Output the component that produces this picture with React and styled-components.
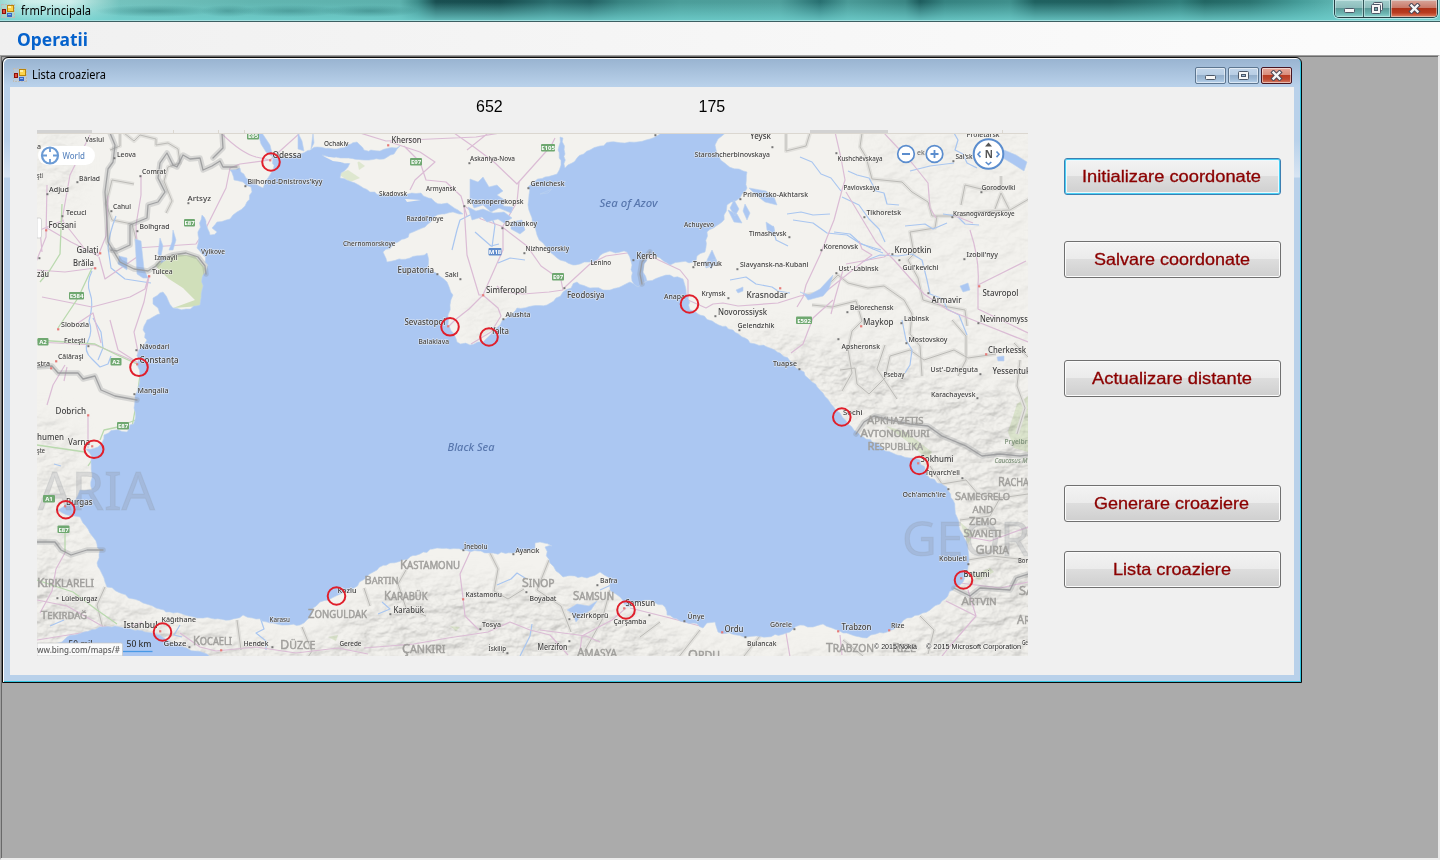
import React from "react";
import styled, { createGlobalStyle, css } from "styled-components";

const GlobalStyle = createGlobalStyle`
  * { box-sizing: border-box; }
  html, body { margin: 0; padding: 0; background: #ababab; overflow: hidden; }
  body { font-family: "Noto Sans", "Open Sans", sans-serif; color: #000; }
`;

const Screen = styled.div`
  width: 1440px;
  height: 860px;
  display: flex;
  flex-direction: column;
`;

const TitleBar = styled.header`
  height: 22px;
  flex: none;
  display: flex;
  align-items: flex-start;
  justify-content: space-between;
  border-bottom: 1px solid #3c5f62;
  box-shadow: inset 0 -1px 0 #a5e0e0;
  background:
    radial-gradient(ellipse 60px 6px at 155px 11px, rgba(40, 110, 110, 0.45), transparent),
    radial-gradient(ellipse 28px 6px at 228px 11px, rgba(40, 110, 110, 0.4), transparent),
    radial-gradient(ellipse 55px 6px at 290px 11px, rgba(40, 110, 110, 0.4), transparent),
    radial-gradient(ellipse 50px 6px at 370px 11px, rgba(40, 110, 110, 0.45), transparent),
    linear-gradient(180deg, transparent 10%, rgba(112, 208, 206, 0.85) 100%),
    linear-gradient(
      90deg,
      #9ad8d2 0, #cdeeea 25px, #d2efec 70px, #a5dcd7 92px, #74c2bd 120px, #62b5b0 250px,
      #5cb0ac 400px, #3c8b89 418px, #194f51 436px, #174c4e 500px, #2b6f70 550px,
      #236264 590px, #378381 620px, #4b9d99 680px, #4f9f9c 780px, #287071 820px,
      #4a9a97 848px, #3a8583 905px, #1e5d5e 920px, #358280 945px, #3f8f8c 1010px,
      #1f6160 1035px, #21605f 1110px, #317f7c 1180px, #226663 1205px, #2b7471 1250px,
      #459c99 1300px, #60b7b4 1340px, #85cfcc 1440px
    );
`;

const TitleGroup = styled.div`
  display: flex;
  align-items: center;
  height: ${(p) => p.$h}px;
  padding-left: ${(p) => p.$left}px;
  gap: ${(p) => p.$gap}px;
`;

const Caption = styled.svg`
  display: block;
  overflow: visible;
  text {
    font-family: ${(p) => p.$family || '"Noto Sans", sans-serif'};
    font-size: ${(p) => p.$size}px;
    font-weight: ${(p) => p.$weight || 400};
    fill: ${(p) => p.$color || "#000"};
  }
`;

const MainControls = styled.div`
  display: flex;
  height: 18px;
  margin-right: 2px;
  border: 1px solid #263f45;
  border-top: 0;
  border-radius: 0 0 5px 5px;
  overflow: hidden;
  box-shadow: 0 0 0 1px rgba(200, 240, 240, 0.8);
`;

const MainControl = styled.div`
  width: ${(p) => p.$w}px;
  display: flex;
  align-items: center;
  justify-content: center;
  padding-bottom: 1px;
  border-left: ${(p) => (p.$first ? 0 : 1)}px solid #35575a;
  box-shadow: inset 0 0 0 1px rgba(230, 250, 250, 0.45);
  background: ${(p) =>
    p.$danger
      ? "linear-gradient(180deg, #d8a69b 0, #c97a69 45%, #ad3117 48%, #b83c20 75%, #df8062 100%)"
      : "linear-gradient(180deg, #a3cfcd 0, #8dbdbc 45%, #5b9997 48%, #6db5b2 80%, #91d5d1 100%)"};
`;

const MenuStrip = styled.nav`
  height: 33px;
  flex: none;
  display: flex;
  align-items: center;
  padding-left: 17px;
  background: linear-gradient(90deg, #f0f0f0, #fcfcfc);
`;

const Workspace = styled.main`
  flex: 1;
  display: flex;
  align-items: flex-start;
  background: #ababab;
  border-style: solid;
  border-width: 1px 2px 2px 1px;
  border-color: #a0a0a0 #e9e9e9 #ededed #a0a0a0;
  box-shadow: inset 1px 1px 0 #696969;
  padding: 1px 0 0 1px;
`;

const ChildWindow = styled.section`
  width: 1300px;
  height: 626px;
  display: flex;
  flex-direction: column;
  border: 1px solid #0a0a0a;
  border-radius: 6px 6px 0 0;
  padding: 1px 7px 7px;
  background:
    linear-gradient(180deg, #98b3d0 0, #b9d1ea 28px, #b9d1ea 82px, #d7e4f2 119px, #b9d1ea 120px);
  box-shadow: inset 1px 1px 0 #fff, inset -1px -1px 0 #35c5e0;
`;

const ChildHeader = styled.div`
  height: 28px;
  flex: none;
  display: flex;
  align-items: flex-start;
  justify-content: space-between;
`;

const ChildControls = styled.div`
  display: flex;
  gap: 2px;
  padding: 8px 2px 0 0;
`;

const ChildControl = styled.div`
  width: 31px;
  height: 17px;
  display: flex;
  align-items: center;
  justify-content: center;
  border: 1px solid ${(p) => (p.$danger ? "#481521" : "#5d7690")};
  border-radius: 2px;
  box-shadow: inset 0 0 0 1px rgba(255, 255, 255, 0.5);
  background: ${(p) =>
    p.$danger
      ? "linear-gradient(180deg, #e6a99c 0, #d98c7b 47%, #b93d24 50%, #bd4a32 75%, #d57c66 100%)"
      : "linear-gradient(180deg, #c3d6ea 0, #b7cde4 47%, #94afcb 50%, #9fbbd7 75%, #b9d3ed 100%)"};
`;

const Client = styled.div`
  flex: 1;
  display: flex;
  background: #f0f0f0;
`;

const MapColumn = styled.div`
  width: 1018px;
  padding-left: 27px;
`;

const Readouts = styled.div`
  height: 43px;
  display: flex;
  gap: 195px;
  padding: 10px 0 0 439px;
  font: 16px/20px "Liberation Sans", sans-serif;
  span { width: 27.5px; }
`;

const MapCanvas = styled.svg`
  display: block;
  width: 991px;
  height: 526px;
  font-family: "Noto Sans", "Open Sans", sans-serif;
`;

const Actions = styled.div`
  display: flex;
  flex-direction: column;
  padding: 71px 0 0 36px;
`;

const ActionButton = styled.button`
  width: 217px;
  height: 37px;
  margin: 0 0 ${(p) => p.$after || 0}px;
  padding: 0 2px 0 0;
  display: flex;
  align-items: center;
  justify-content: center;
  border: 1px solid #707070;
  border-radius: 3px;
  background: linear-gradient(180deg, #f3f3f3 0, #ebebeb 48%, #dddddd 50%, #cfcfcf 100%);
  box-shadow: inset 0 0 0 1px #fbfbfb;
  ${(p) =>
    p.$focused &&
    css`
      border-color: #3c7fb1;
      box-shadow: inset 0 0 0 1px #48d0f5, inset 0 0 0 2px #eef8fc;
    `}
`;

function Label({ children, width, height, base, ...rest }) {
  return (
    <Caption width={width} height={height} {...rest}>
      <text x="0" y={base} textLength={width} lengthAdjust="spacingAndGlyphs">{children}</text>
    </Caption>
  );
}

function FormIcon() {
  return (
    <svg width="14" height="14" viewBox="0 0 14 14" shapeRendering="crispEdges">
      <rect x="0.5" y="0.5" width="13" height="13" fill="rgba(215,205,195,.35)" stroke="#bcbcb8" strokeDasharray="2 1" />
      <rect x="6" y="1" width="7" height="7" fill="#b98509" />
      <rect x="7" y="2" width="5" height="5" fill="#fcd34c" />
      <rect x="7" y="2" width="3" height="2" fill="#fff0a6" />
      <rect x="1" y="5" width="4" height="5" fill="#8d1009" />
      <rect x="2" y="6" width="2" height="3" fill="#e0503c" />
      <rect x="6" y="9" width="5" height="4" fill="#3867c4" />
      <rect x="7" y="10" width="3" height="1" fill="#8fb6f3" />
    </svg>
  );
}

const MinGlyph = () => (
  <svg width="13" height="13" viewBox="0 0 13 13">
    <rect x="1.5" y="6.5" width="10" height="4" rx="1" fill="#f7f7f7" stroke="#4c5767" />
  </svg>
);
const MaxGlyph = () => (
  <svg width="13" height="11" viewBox="0 0 13 11">
    <rect x="1.5" y="1.5" width="10" height="8" rx="1" fill="#f7f7f7" stroke="#4c5767" />
    <rect x="4.5" y="4.5" width="4" height="2" fill="#9fb8d2" stroke="#4c5767" />
  </svg>
);
const RestoreGlyph = () => (
  <svg width="14" height="14" viewBox="0 0 14 14">
    <rect x="3.5" y="1.5" width="9" height="8" rx="1" fill="#f7f7f7" stroke="#4c5767" />
    <rect x="1.5" y="3.5" width="9" height="9" rx="1" fill="#f7f7f7" stroke="#4c5767" />
    <rect x="4.5" y="6.5" width="3" height="3" fill="#79a9a8" stroke="#4c5767" />
  </svg>
);
const CloseGlyph = () => (
  <svg width="13" height="11" viewBox="0 0 13 11">
    <path d="M3.500 2.500l6 6M9.500 2.500l-6 6" stroke="#4e4a57" strokeWidth="4.4" strokeLinecap="square" />
    <path d="M3.500 2.500l6 6M9.500 2.500l-6 6" stroke="#f6f6f6" strokeWidth="2.4" strokeLinecap="square" />
  </svg>
);

/* Map geometry, in window pixels */
const blackSea = [
  [273,155],[285,158],[297,155],[317,147],[337,149],[357,142],[364,150],[380,151],[400,146],[394,154],[384,159],[364,160],[340,158],[322,155],[333,161],[350,163],[341,173],[340,178],[352,182],[370,192],[385,195],[408,194],[421,193],[435,202],[450,205],[458,210],[463,214],
  [453,212],[437,215],[425,227],[413,232],[398,242],[383,252],[387,262],[410,258],[427,253],[428,268],[436,273],[447,282],[453,295],[450,305],[448,315],[448,325],[454,334],[457,342],[470,345],[483,342],[493,332],[500,325],[507,318],[517,308],[532,306],[547,305],[556,298],[563,292],[577,282],[590,288],[610,290],[622,286],[630,282],[638,287],[647,281],[660,277],[670,275],[683,279],[686,290],[688,298],[690,310],[700,315],[715,323],[733,330],[750,343],[767,347],[780,353],[790,361],[800,370],[812,382],[823,393],[831,404],[840,413],[848,424],[857,432],[866,439],[877,443],[885,451],[897,455],[910,458],[920,460],[927,475],[937,483],[947,487],[953,500],[957,517],[960,530],[966,541],[968,550],[968,567],[965,577],[960,585],[953,590],[942,601],[930,610],[919,615],[907,618],[897,627],[887,632],[876,634],[867,638],[855,636],[843,633],[832,628],[823,624],[813,627],[800,625],[790,632],[767,637],[747,637],[732,634],[718,632],[715,622],[707,623],[703,628],[693,623],[680,621],[667,615],[665,607],[650,600],[633,603],[627,607],[620,597],[610,590],[610,578],[600,572],[587,578],[575,576],[563,577],[556,571],[550,563],[545,547],[552,546],[540,542],[535,543],[535,549],[513,553],[493,553],[478,551],[463,550],[450,549],[437,548],[420,554],[403,560],[390,563],[377,570],[363,580],[354,588],[343,593],[332,598],[320,602],[313,608],[310,617],[300,625],[285,625],[270,623],[256,619],[243,615],[230,620],[215,619],[200,618],[185,615],[170,612],[156,608],[143,603],[123,594],[107,587],[104,578],[97,563],[100,550],[93,537],[88,529],[83,523],[80,517],[67,515],[58,510],[66,504],[73,502],[80,490],[92,490],[92,474],[92,457],[86,449],[98,447],[102,443],[104,435],[115,430],[127,432],[135,420],[134,408],[135,400],[140,380],[138,367],[138,353],[147,340],[143,330],[147,320],[160,314],[158,308],[153,304],[153,298],[163,292],[168,300],[173,308],[186,309],[200,305],[202,290],[203,275],[208,265],[203,255],[197,248],[198,235],[202,215],[206,221],[210,235],[217,232],[212,228],[217,222],[230,219],[233,215],[237,212],[245,206],[252,192],[251,187],[243,182],[234,180],[230,170],[240,168],[246,178],[263,188],[268,178],[273,170],
];
const azov = [
  [528,187],[535,181],[545,177],[557,174],[561,165],[558,150],[560,137],[563,138],[565,168],[577,158],[590,150],[600,146],[610,142],[625,143],[637,142],[650,139],[664,132],[727,132],[718,139],[715,145],[719,156],[727,165],[739,169],[747,172],[747,188],[740,198],[727,205],[724,215],[722,222],[707,232],[705,252],[697,256],[693,262],[680,262],[670,265],[660,258],[650,255],[644,264],[643,272],[647,281],[638,287],[632,281],[632,265],[627,252],[607,252],[598,259],[590,262],[580,264],[573,265],[560,260],[550,252],[543,243],[537,235],[534,225],[532,218],[528,205],[529,195],
];
const marmara = [[62,642],[67,637],[84,632],[103,627],[115,626],[127,628],[145,632],[160,635],[172,643],[183,647],[195,651],[207,654],[214,660],[55,660],[52,645]];

const smallWaters = [
  "M135 239l6 2 3 28 4 9 -5 0 -6 -4z",
  "M119 256l8 2 0 12 -9 -6z",
  "M160 238l3 8-2 10 5 4-5 3-3-10z",
  "M173 230l3 10-3 10-4 0 3-8z",
  "M258 133l3 11 5 8 7 5-3-12-4-6-4-6z M298 133l4 8 2 10-6-2z M313 133l1 10 -3 6z",
  "M470 179l8 3 5-5 6 10 8-2 6 6-6 4 9 6-3 5 10 1-2 6-12-5-8 4-8-7-9 3-4-9z",
  "M468 207l8 4 7-2 10 4 11-1 8 6-8 5-6-4-11 3-5-5-10 3z",
  "M511 222l11-2 3 10-5 4-9-5z M540 194l12-5-4 4z",
  "M749 188l17 3 8 6 3 8-12-3-9-7z M734 200l5 9-4 7-5-8z M728 210l9 4 5 9-8-1z M745 204l5 9-3 7-4-9z M766 222l8 5 1 10-8-7z M712 250l4 9-5 10-4-9z M704 262l12-3 2 5-12 4z",
  "M800 292l9 3 11-6 13-14-4 14-6 7-15 4-4-6z",
  "M1004 150l12 5 11 7-3 9-11-7-10-6z M960 286l8-3 2 7-7 2z M997 357l7-1 0 5-6 0z",
  "M567 610l10-6 12 2 8-5-6 9-9 5-6 7-4-9z",
  "M736 290l7-3 0 4-5 2z",
];
const rivers = [
  "M92 271q-6 12-2 22t-1 28q4 10-1 20t4 18l8 8 8-3 3-8",
  "M93 318l8 14 2 16-5 12",
  "M116 216q-7 18-8 32l3 20 14 11 26 4",
  "M800 157l12 5 9 12 10 4 10 13 M848 171l9 4 12 3 7 13 8 2 3 11 12 1",
  "M787 214l14-2 12 3 17-1 M793 220l20 3 14 10 20 2 14 9 20 6",
  "M834 232l16 2 10 9 13 6 10 4 M842 197l17 8 10 14 10 10 6 13",
  "M954 133l4 7-3 10 8 4 4 9 10 5 M910 171l20-5 24-3 M905 226l20-2 8 5 14-6",
  "M730 280l16-3 10 7 16 3 6 4 12 2 M773 226l3 14 12 6",
  "M862 262l18-7 18 1 14-2 10 6 5 20 3 14 13 5 4 10 12 6 8 20",
  "M902 320l4 20 6 10-2 15-5 8 M943 214l14 2 8 8 14 1",
  "M452 250l5-20 3-10 12-6 18 1 5 10-3 22 M475 232l16 14 8-2",
  "M525 260l-15-2-12 5 M497 585l14-6 6-6 8 5 M520 656l10-20 2-12 M600 590l22-10 M378 614l12-5-8-7",
  "M260 617l4 12 -8 4 10 8 0 9 M180 625l-6 10 8 2 M54 464l7 2 M64 620l-14 6",
];
const roads = [
  "M221 133q20 20 35 24l14 3 30-27 M270 160l-30 4-10 4-4 20-20 40-10 16-60 4",
  "M47 185l-1 52-10 25 M64 220l-24 10 2 22 M47 228l24 14 20 10 8 2 M90 135l-20 40-8 45 22 28 14 8 8-20 2-40 M141 175l0 20-5 30 1 32-32 22-6-22",
  "M149 275l-4 14-15 8-38 10-50-10 M149 277l-5 25-10 30 5 25 M95 268l-30 4-28-2",
  "M37 342l58 3 25 10 18 8 M75 325l18-12 8 30 M110 320l8 30 22 14 M65 365l-12 20-6 20 M67 367l-3 14 M88 415v33",
  "M390 142l30 10 15 10 -20 18-5 10 M404 146l16 16 6 18 20 2 15 14 6 20 M467 150l20-16 M360 133l26 8 90-4 24-4 M454 133l20 14 20 15 23 22 34-38 4-8",
  "M464 205l3 50 12 40 4 0 20-45 0-24 14-24 2-20 M466 207l15 12 20 7 26 20 14 20 20 14 2 10-14 2-26 2-20-2-6-6 M564 288l26-24 16-8 28-4 16 4 30 14 8 10v18",
  "M483 295l-14 14-14 11-6 6 M484 296l14 12 3 8-10 16-20 12",
  "M688 300l18 8 7-4 10-1 15 3 40-3 22-7 24-3 40-32 8-6-10-6-3-8",
  "M842 190l3-10-4-22-6-26 M842 190l-8 30-14 35-14 30-3 12-6 10 M846 192l30 50 18 18 30 34 24 16 30 12 50 20",
  "M846 264l38-7 6-4 M970 230q10 30 8 55l0 24 50 24 M978 285l20-10 28-14 M953 215l20 8",
  "M884 133l28 30 16 20 2 25 6 10 M843 270l-8 28-4 16 M833 300l-20 18 -10 26-12 9",
  "M968 537l22 4 38-14 M968 590l8 26-26 30-8 10 M976 616l-30-15 M960 583l40 5 28-6",
  "M37 600l30 6 35 20 20 4 20-8 M66 551l-10 18-4 22-12 22 M37 640l50-8",
  "M470 552l-10 22 3 24 2 18 14 14 M364 648l50-4 34-6 40-6 22-10 20 8 20 5 18 20 M580 650l2-14 30-16 14-12 M540 630l46 6 14 6",
  "M180 633l20 14 16 4 40-4 40 6 42-5 30 6 M840 635l2 20 M786 633l4 24 M630 608l40 10 30 8",
];
const greenRoads = [
  "M62 204l-2 50-10 16-10 12 M92 268l-14 30-20 30 M37 340l58 4 20 10 22 10 M37 580l36 12 24 18 20 14 M37 445l48 7 M100 440l4-10 14-3 20-8 M140 375l-4 30-4 22 M65 530l0 22 M92 460l-4 6",
];
const regions = [
  "M124 133l10 8 6-6 16 4 0 6 12-2 10 6 2 14-12 4-4 14 8 20-6 12 M134 184l-22-4-6 24 6 16 20 4 8 30 M120 134v12l-10 4",
  "M786 133l0 18 20-5 4-13 M862 133l-2 14 6 10 6 22 30 3 10 10 16 10 4 14 30 0 14-4 34-2 24-14 M937 216l-2 12-25 4 4 22-6 6 10 18 5 22 20 6 22 4 2 16",
  "M961 205l4-20 20 5 16-2 0-12 M995 209l6-16 8 16",
  "M805 295l15-2 18-18 10 8 20 5 16-2 20 14 8 14-2 20 10 12 2 30 M812 305l20 2 24-6 6 20-10 10-4 18 4 24-10 18 M885 345l-8 24 20 30 M840 370l15-2 2 16 12 10 16-16 5-22 20-6 14 10 30-10 14 8 28-4 M952 320l14 16 0 24-8 16",
  "M1014 343l14 14 M1020 360l-3 26 8 22-8 26",
  "M105 587l-8 18 6 24-4 14 M237 620l4 30 M302 627l10 24-4 6 M490 553l8 16-4 22 14 8 16-10 M549 560l-12 30 24 16 10 26 M364 588l6 18 M406 570l-8 14 8 24 20 8 M610 590l-8 30-18 32 M760 636l-16 20 M700 630l-22 28 M843 640l20 16 M920 616l14 14-6 24 M660 622l-20 15",
  "M930 466l12 18 24-4 12 14 24 4 M960 520l30-4 10-18 28-4 M968 560l24-4 36 4",
];
const borders = [
  "M110 133L115 145 113 162 108 169 105 192 107 222 108 242 114 252 120 262 134 269 148 271 156 266 162 259 172 255 186 253 198 257 205 266 206 274",
  "M111 250L117 251 130 245 130 225 147 218 148 205 158 202 165 192 158 178 160 163 167 153 173 165 177 167 183 155 190 159 200 158 203 170 212 166 220 161 223 167 237 167 M222 133L223 148 213 158",
  "M37 367l15-1 6 7 20 0 5 6 12-3 6 14 14 6 22 4",
  "M37 542l18 0 6 8 10 5 16-5 16 0",
  "M856 434l8-12 10-6 16 4 20 4 18 2 14 10 24 10 16 10 18-2 20 2 20-3",
  "M954 588l16 8 10-8 30 2 6-12 12-4",
  "M650 252l-8 10-2 12 2 10",
];

/* Adds small deterministic bends to every edge of a shoreline */
function shore(points) {
  const out = [];
  const n = points.length;
  let seed = 7;
  const rnd = () => {
    seed = (seed * 16807) % 2147483647;
    return seed / 2147483647 - 0.5;
  };
  points.forEach(([x, y], i) => {
    const [nx, ny] = points[(i + 1) % n];
    out.push([x, y]);
    const len = Math.hypot(nx - x, ny - y);
    const steps = Math.floor(len / 3.5);
    for (let s = 1; s < steps; s += 1) {
      const t = s / steps;
      out.push([x + (nx - x) * t + rnd() * 2.4, y + (ny - y) * t + rnd() * 2.4]);
    }
  });
  return "M" + out.map((p) => p.map((v) => v.toFixed(1)).join(" ")).join("L") + "Z";
}

/* text, x, baseline, width, size */
const towns = [
  ["Vaslui",85,142,19,7.5],["Leova",117,156.5,19,7.5],["Comrat",142,174,24,7.5],["Bârlad",79,180.5,21,7.5],["Adjud",49,191.5,20,7.5],["Artsyz",187.5,201,23.5,7.5],["Cahul",113,209,18,7.5],["Tecuci",66,215,20.5,7.5],["Focşani",48.5,228,27.5,7.8],["Bolhgrad",139.5,228.5,30,7.5],["Galaţi",76.5,252.5,22,8],["Brăila",73,266,21,8],["Vylkove",201,254,24,7],["Izmayil",154.5,260,23,7.3],["Tulcea",152,273.5,20.5,7.3],["zău",37,277,12,7.8],["şti",37,178,6,7],["a",37,149,4,7],
  ["Odessa",272.5,157.5,29,8.6],["Ochakiv",324,146,24.5,7.3],["Bilhorod-Dnistrovs'kyy",247.5,183.5,75,7.3],["Kherson",391.5,143,30,8],["Askaniya-Nova",470,161,45,7.3],["Genichesk",530.5,186,34,7.6],["Armyansk",426,191,30,7.3],["Skadovsk",379,195.5,28,7.2],["Krasnoperekopsk",467,204,56.5,7.5],["Razdol'noye",406.5,221,37,7.2],["Dzhankoy",505,226,32,7.5],["Chernomorskoye",343,245.5,52.5,7.2],["Nizhnegorskiy",525.5,251,43.5,7.2],["Eupatoria",397.5,273,36.5,8],["Saki",445,277,13.5,7.5],["Lenino",590.5,264.5,20.5,7.2],["Kerch",636.5,259,20.5,8],["Simferopol",486,293,41,8],["Feodosiya",567,298,37.5,7.8],["Anapa",664,298.5,21,7.5],["Alushta",505.5,317,25,7.6],["Sevastopol",404.5,325,41,8],["Yalta",491,334,18,8],["Balaklava",418.5,343.5,30.5,7.4],
  ["Yeysk",750,139,21,8],["Staroshcherbinovskaya",694.5,156.5,75.5,7.5],["Kushchëvskaya",837.5,160.5,45,7.3],["Proletarsk",966.5,137,33,7.5],["Sal'sk",955.5,159,17,7.3],["Pavlovskaya",843.5,190,36,7.2],["Gorodoviki",981.5,190,34,7.2],["Primorsko-Akhtarsk",743,197,65,7.5],["Tikhoretsk",866.5,215,34.5,7.5],["Krasnogvardeyskoye",953,216,61.5,7.3],["Achuyevo",684,227,30,7.3],["Timashevsk",749,235.5,37.5,7.5],["Korenovsk",823.5,248.5,34.5,7.5],["Kropotkin",894.5,252.5,37,7.8],["Izobil'nyy",966.5,257,31.5,7.5],["Temryuk",693,265.5,29,7.5],["Slavyansk-na-Kubani",740,266.5,68.5,7.5],["Ust'-Labinsk",838.5,270.5,40,7.5],["Gul'kevichi",902.5,269.5,36,7.5],["Krymsk",701.5,295.5,24,7.6],["Krasnodar",746.5,298,41,8.3],["Stavropol",982.5,296,36,8],["Armavir",931.5,303,30,8],["Novorossiysk",718,315,49,8],["Belorechensk",850,310,43.5,7.5],["Labinsk",904,321,25,7.5],["Maykop",863,325,30.5,8],["Nevinnomyssk",980,322,52,8],["Gelendzhik",737.5,328,37,7.4],["Mostovskoy",908.5,341.5,39,7.5],["Apsheronsk",841.5,348.5,38.5,7.5],["Cherkessk",988,353,38,7.7],["Tuapse",773,366,24,7.4],["Psebay",883.5,377,21,7.2],["Ust'-Dzheguta",930.5,372,47.5,7.4],["Yessentuki",992.5,373.5,40,7.7],["Karachayevsk",931,396.5,44.5,7.4],["Sochi",843,414.5,19.5,7.6],["Sokhumi",920.5,462,33,7.8],["Tqvarch'eli",925,475,35,7.4],["Och'amch'ire",902.5,497,43.5,7.4],
  ["Slobozia",61,327,28,7.5],["Feteşti",64,343,21.5,7.5],["Călăraşi",58,359,25.5,7.5],["stra",37,366,13,7.5],["Năvodari",139.5,348.5,30,7.5],["Constanţa",139.5,363,39,8],["Mangalia",137.5,392.5,31,7.5],["Dobrich",55.5,413.5,30.5,8],["humen",37,439.5,27,7.8],["Varna",68,445,22,8],["şte",37,452.5,8,7.5],["Burgas",66,505,26.5,8],
  ["Lüleburgaz",61.5,601,36,7.6],["Istanbul",123.5,628,34,8.3],["Kâğıthane",161.5,621.5,34.5,7.5],["Gebze",163.5,645.5,23,7.5],["Karasu",269.5,622,20.5,7.2],["Hendek",243.5,646,25,7.5],["Gerede",339.5,645.5,22,7.2],["Kozlu",337.5,593,19,7.4],["İnebolu",464,548.5,23.5,7.3],["Ayancık",515.5,552.5,24,7.2],["Kastamonu",465.5,597,36.5,7.6],["Boyabat",529.5,601,27,7.5],["Karabük",393.5,612.5,30.5,7.8],["Tosya",482,627,19,7.5],["İskilip",488.5,651,17.5,7.5],["Merzifon",537.5,650,30,7.7],["Vezirköprü",572,617.5,36.5,7.6],["Bafra",600,583,17.5,7.5],["Samsun",625.5,605.5,29.5,7.8],["Çarşamba",613.5,624,33,7.6],["Ünye",687.5,619,17,7.4],["Ordu",724.5,631.5,19,7.7],["Bulancak",747,646,29.5,7.4],["Görele",770,627,22,7.4],["Trabzon",841.5,630,30,7.8],["Rize",891,628,13.5,7.4],["Kobuleti",939,561,28,7.4],["Batumi",963.5,577,26,7.8],["Bor",1018,563,10,7],["Ge",1022,645,6,6.5],
];
const provinces = [
  ["Kırklareli",37,587,57,10.5],["Tekirdağ",41,619,46,10],["Zonguldak",308,618,59,10.5],["Bartın",364.5,584,34,10],["Kastamonu",400,568.5,60,10.5],["Karabük",384,600,43.5,10.5],["Sinop",522,587,32.5,11],["Samsun",573,599.5,41,10.5],["Kocaeli",193,645,39,10.5],["Düzce",280,649,35.5,11.5],["Çankırı",402,652.5,43.5,11.5],["Amasya",577,657,40,11],["Ordu",688,659,32,11],["Trabzon",826,652,48,11.5],["Rize",892,652,24,10.5],["Artvin",961.5,605,35,10],["Guria",975.5,554,33.5,11],["Apkhazetis",867,424,56.5,9.5],["Avtonomiuri",860.5,436.5,69,9.5],["Respublika",867.5,449.5,55.5,10],["Samegrelo",955,500,55,10],["and",972.5,512.5,20.5,9.5],["Zemo",969,525,27.5,10],["Svaneti",963.5,537,38,9],["Racha",998,485.5,31,10.5],["Sa",1019,595,14,10.5],["Ar",1017,624,13,10.5],
];
const shields = [["E95",247,136,12],["E105",541,148,14],["E97",410,162,12],["E87",184,223,11],["E584",69,296,15],["E97",552,277,12],["E592",796,320.5,16],["A2",37.5,342,11],["A2",110.5,362,11],["E87",117,426,12],["A1",43,499,12],["E87",57.5,529.5,12],["M18",488.5,252,13,"#5f8bcb"]];
const dots = [[47,194],[77,182],[62,216],[114,158],[140,176],[111,211],[137,231],[188,203],[39,258],[245,186],[469,163],[528,188],[464,206],[502,228],[524,253],[460,279],[437,274],[633,260],[564,288],[503,319],[655,135],[772,147],[836,153],[740,199],[864,217],[789,237],[821,250],[892,254],[964,259],[952,217],[899,260],[836,273],[693,267],[737,269],[728,298],[715,316],[928,293],[847,312],[901,323],[978,323],[739,330],[838,339],[906,343],[799,369],[980,374],[977,398],[962,478],[948,489],[88,346],[136,350],[134,394],[57,598],[189,647],[272,647],[463,550],[513,554],[526,592],[390,614],[480,629],[569,619],[597,585],[649,615],[684,621],[745,637],[794,629],[968,564],[507,653],[569,641],[953,161],[981,192]];
const redDots = [[388,145],[46,230],[100,253],[95,268],[149,276],[270,160],[448,326],[483,295],[780,288],[979,286],[861,326],[986,354],[58,329],[56,361],[137,364],[88,415],[92,446],[65,506],[160,631],[221,650],[463,599],[624,608],[722,632],[838,631],[889,630],[961,578],[918,463],[51,368]];
const ports = [[271,162],[450,326.8],[489,337],[689.5,304],[139,367.3],[94,449.3],[65.8,509.7],[841.8,417],[919.2,465.5],[963.5,580],[626,610],[336.5,596],[162.5,632]];

function SmallCaps({ item: [t, x, y, w, s] }) {
  const head = t === "and" ? "" : t[0];
  const tail = (t === "and" ? t : t.slice(1)).toLocaleUpperCase(/[ıİ]/.test(t) ? "tr" : "en");
  const caps = t === "Kırklareli" ? "IRKLARELI" : tail;
  return (
    <text x={x} y={y} textLength={w} lengthAdjust="spacingAndGlyphs" fontSize={s * 1.12}>
      {head}
      <tspan fontSize={s * 0.94}>{caps}</tspan>
    </text>
  );
}

function SeaMap() {
  return (
    <MapCanvas viewBox="37 130 991 526">
      <defs>
        <filter id="relief" x="0" y="0" width="100%" height="100%" colorInterpolationFilters="sRGB">
          <feTurbulence type="fractalNoise" baseFrequency="0.055 0.085" numOctaves="4" seed="12" result="n" />
          <feDiffuseLighting in="n" surfaceScale="3" lightingColor="#ffffff" result="l">
            <feDistantLight azimuth="225" elevation="66" />
          </feDiffuseLighting>
          <feComposite in="l" in2="SourceGraphic" operator="in" />
        </filter>
        <filter id="soft"><feGaussianBlur stdDeviation="13" /></filter>
        <mask id="hills" maskUnits="userSpaceOnUse" x="37" y="130" width="991" height="526">
          <g filter="url(#soft)" fill="#fff">
            <path d="M730 325L800 340 870 350 930 380 1060 400V700H20V600L60 560 100 600 300 650 400 580 580 590 700 650 860 660 950 610 980 560 955 480 840 410z" />
            <path opacity=".55" d="M20 415L70 420 90 480 90 550 20 590zM470 308L510 300 500 335 465 340zM37 133H75V200H37z" />
            <path opacity=".25" d="M870 120H1040V400L850 370z" />
          </g>
        </mask>
      </defs>
      <rect x="37" y="130" width="991" height="3" fill="#efefef" />
      <path d="M37 130h55v3H37zM810 130h78v3h-78z" fill="#d2d2d2" />
      <path d="M37 133.5h991M173.500 130v3M218.500 130v3M244.500 130v3M1002.500 130v3" stroke="#dbd7d0" fill="none" />
      <svg x="37" y="134" width="991" height="522" viewBox="37 134 991 522">
        <rect x="37" y="134" width="991" height="522" fill="#f3f2ee" />
        <g fill="#d0dfba">
          <path d="M155 265l8-7 12-4 20 2 10 12-2 24-2 14-28 2 22-8-12-12-14-9-8-7z" />
          <path opacity=".6" d="M338 174l10-4 12 8-10 4z M357 160l8 6-6 4z M1017 404l11-8v56l-14-4-6-16z M886 426l20 6 26 20-4 8-20-18z M960 522l14 12-6 10z M970 576l20-8 4 4-14 8z M328 637l10-2-2 6z M450 626l10 1-4 4z" />
        </g>
        <g mask="url(#hills)" style={{ mixBlendMode: "multiply" }} opacity=".42">
          <rect x="37" y="134" width="991" height="522" fill="#fff" filter="url(#relief)" />
        </g>
        <g fill="none" strokeLinejoin="round">
          <g stroke="#e2e1dd" strokeWidth="4">{regions.map((d) => <path key={d} d={d} />)}</g>
          <g stroke="#bcbbb7" strokeWidth="1">{regions.map((d) => <path key={d} d={d} />)}</g>
          <g stroke="#a9c6f0" strokeWidth="1.200">{rivers.map((d) => <path key={d} d={d} />)}</g>
          <g stroke="#dbbcd5" strokeWidth="1.200">{roads.map((d) => <path key={d} d={d} />)}</g>
          <g stroke="#b9d9ae" strokeWidth="1.300">{greenRoads.map((d) => <path key={d} d={d} />)}</g>
        </g>
        <g fill="#abc7f2" stroke="#bcd1ee" strokeWidth="0.6">
          <path d={shore(blackSea)} />
          <path d={shore(azov)} />
          <path d={shore(marmara)} />
          {smallWaters.map((d) => <path key={d} d={d} />)}
        </g>
        <path d="M333 161l-10-5 18 3 20 1-6 4z M405 199l16 1-14 2z" fill="#f3f2ee" />
        <g fill="none" strokeLinejoin="round" strokeLinecap="round">
          <g stroke="#84878a" strokeOpacity=".26" strokeWidth="5.500">{borders.map((d) => <path key={d} d={d} />)}</g>
          <g stroke="#97989a" strokeWidth="1.300" opacity=".85">{borders.map((d) => <path key={d} d={d} />)}</g>
        </g>

        <g fill="#8b8f96" fillOpacity=".24" stroke="#8b8f96" strokeOpacity=".16" strokeWidth="1" fontSize="52">
          <text x="38" y="510" textLength="117" lengthAdjust="spacingAndGlyphs">ARIA</text>
          <text x="902" y="555.500" fontSize="47" textLength="128" lengthAdjust="spacingAndGlyphs">GEOR</text>
        </g>
        <g fill="#a09f9c" stroke="#a09f9c" strokeWidth=".45">
          {provinces.map((p) => <SmallCaps key={p[0] + p[2]} item={p} />)}
        </g>

        <g fill="#777">{dots.map(([x, y]) => <rect key={x + "-" + y} x={x - 0.6} y={y - 0.8} width="2" height="2" />)}</g>
        <g fill="#e67b78">{redDots.map(([x, y]) => <rect key={x + "-" + y} x={x - 0.9} y={y - 0.8} width="2.200" height="2.200" />)}</g>
        {shields.map(([t, x, y, w, c]) => (
          <g key={t + x}>
            <rect x={x} y={y - 4} width={w} height="7.500" rx="1" fill={c || "#6fa870"} />
            <text x={x + w / 2} y={y + 2.2} fontSize="6" fontWeight="700" fill="#fff" textAnchor="middle">{t}</text>
          </g>
        ))}
        <g fill="#3f3f3f" fontWeight="500" stroke="#f6f5f2" strokeOpacity=".7" strokeWidth="1.200" style={{ paintOrder: "stroke" }}>
          {towns.map(([t, x, y, w, s]) => (
            <text key={t + x} x={x} y={y} fontSize={s * 1.04} textLength={w} lengthAdjust="spacingAndGlyphs">{t}</text>
          ))}
        </g>
        <g fontStyle="italic" fontWeight="500" fill="#5877ae">
          <text x="599.500" y="207" fontSize="11" textLength="58" lengthAdjust="spacingAndGlyphs">Sea of Azov</text>
          <text x="447.500" y="451" fontSize="11" textLength="47" lengthAdjust="spacingAndGlyphs">Black Sea</text>
          <text x="1004.500" y="443.500" fontSize="7.800" fill="#7b9078" fontStyle="normal" textLength="23" lengthAdjust="spacingAndGlyphs">Pryelbr</text>
          <text x="994.500" y="462.500" fontSize="7.800" fill="#7b9078" textLength="33" lengthAdjust="spacingAndGlyphs">Caucasus M</text>
        </g>

        <rect x="38" y="146" width="57" height="19" rx="9.500" fill="#fff" />
        <g stroke="#6b9bd5" fill="none">
          <circle cx="50" cy="155.500" r="8" strokeWidth="2.200" />
          <path d="M50 147v5M50 159v5M42 155.500h5M53 155.500h5" strokeWidth="1.800" />
        </g>
        <text x="62.500" y="159" fontSize="8.800" fontWeight="500" fill="#5e88c0" textLength="22.500" lengthAdjust="spacingAndGlyphs">World</text>
        <path d="M37 218h2.500a2 2 0 0 1 2 2v16a2 2 0 0 1-2 2H37z" fill="#fff" stroke="#c5c5c5" strokeWidth=".7" />

        <g fill="#fff" stroke="#5b8dce" strokeWidth="1.700">
          <circle cx="906" cy="154" r="8.300" />
          <circle cx="934.500" cy="154" r="8.300" />
          <path d="M902 154h8M930.500 154h8M934.500 150v8" strokeWidth="1.800" />
          <circle cx="988.500" cy="154" r="14.800" strokeWidth="2" />
          <path d="M980.500 151.500l-2.500 2.800 2.500 2.800M996.500 151.500l2.500 2.800-2.500 2.800M985.700 162l2.800 2.500 2.800-2.500" fill="none" strokeWidth="1.600" />
        </g>
        <path d="M985 146.500l3.500-4 3.500 4z" fill="#555" />
        <text x="984.800" y="157.800" fontSize="10" fontWeight="700" fill="#555">N</text>
        <text x="917" y="155" fontSize="7" fill="#666">ek</text>

        <g fontSize="8.500" fontWeight="500" fill="#333">
          <text x="68.500" y="647" textLength="24" lengthAdjust="spacingAndGlyphs">50 mil</text>
          <text x="126.500" y="647" textLength="25" lengthAdjust="spacingAndGlyphs">50 km</text>
        </g>
        <path d="M123 651.500h29.500" stroke="#4999e5" strokeWidth="1.300" />
        <path d="M37 643h84q1.500 0 1.500 1.500V656H37z" fill="#fafafa" stroke="#c6c6c6" strokeWidth=".7" />
        <text x="37" y="653" fontSize="8.800" fontWeight="500" fill="#5c5c5c" textLength="83" lengthAdjust="spacingAndGlyphs">ww.bing.com/maps/#</text>
        <g fontFamily="Liberation Sans, sans-serif" fontSize="7.500" fill="#222" stroke="#fff" strokeOpacity=".6" strokeWidth="1" style={{ paintOrder: "stroke" }}>
          <text x="874" y="649.300" textLength="43" lengthAdjust="spacingAndGlyphs">© 2015 Nokia</text>
          <text x="926" y="649.300" textLength="95" lengthAdjust="spacingAndGlyphs">© 2015 Microsoft Corporation</text>
        </g>
        <g fill="none" stroke="#e01f2b" strokeWidth="2">
          {ports.map(([x, y]) => <ellipse key={x} cx={x} cy={y} rx={x === 94 ? 9.5 : 8.8} ry="8.700" />)}
        </g>
      </svg>
    </MapCanvas>
  );
}

const actions = [
  { text: "Initializare coordonate", width: 179, after: 46, focused: true },
  { text: "Salvare coordonate", width: 156, after: 82 },
  { text: "Actualizare distante", width: 160, after: 88 },
  { text: "Generare croaziere", width: 155, after: 29 },
  { text: "Lista croaziere", width: 118 },
];

const ButtonLabel = styled(Caption)`
  text { stroke: #8b0000; stroke-width: 0.3px; }
`;

export default function App() {
  return (
    <Screen>
      <GlobalStyle />
      <TitleBar>
        <TitleGroup $left={1} $gap={6} $h={21}>
          <FormIcon />
          <Label width={70} height={14} base={11} $size={12}>frmPrincipala</Label>
        </TitleGroup>
        <MainControls>
          <MainControl $w={28} $first><MinGlyph /></MainControl>
          <MainControl $w={27}><RestoreGlyph /></MainControl>
          <MainControl $w={47} $danger><CloseGlyph /></MainControl>
        </MainControls>
      </TitleBar>
      <MenuStrip>
        <Label width={71} height={24} base={19} $size={18.5} $weight={700} $color="#0562cc">Operatii</Label>
      </MenuStrip>
      <Workspace>
        <ChildWindow>
          <ChildHeader>
            <TitleGroup $left={3} $gap={5} $h={32}>
              <FormIcon />
              <Label width={74} height={14} base={11} $size={12}>Lista croaziera</Label>
            </TitleGroup>
            <ChildControls>
              <ChildControl><MinGlyph /></ChildControl>
              <ChildControl><MaxGlyph /></ChildControl>
              <ChildControl $danger><CloseGlyph /></ChildControl>
            </ChildControls>
          </ChildHeader>
          <Client>
            <MapColumn>
              <Readouts><span>652</span><span>175</span></Readouts>
              <SeaMap />
            </MapColumn>
            <Actions>
              {actions.map((a) => (
                <ActionButton key={a.text} $after={a.after} $focused={a.focused}>
                  <ButtonLabel width={a.width} height={20} $size={16.5} $color="#8b0000" $family='"Liberation Sans", sans-serif'>
                    <text x="0" y="15" textLength={a.width} lengthAdjust="spacingAndGlyphs">{a.text}</text>
                  </ButtonLabel>
                </ActionButton>
              ))}
            </Actions>
          </Client>
        </ChildWindow>
      </Workspace>
    </Screen>
  );
}
